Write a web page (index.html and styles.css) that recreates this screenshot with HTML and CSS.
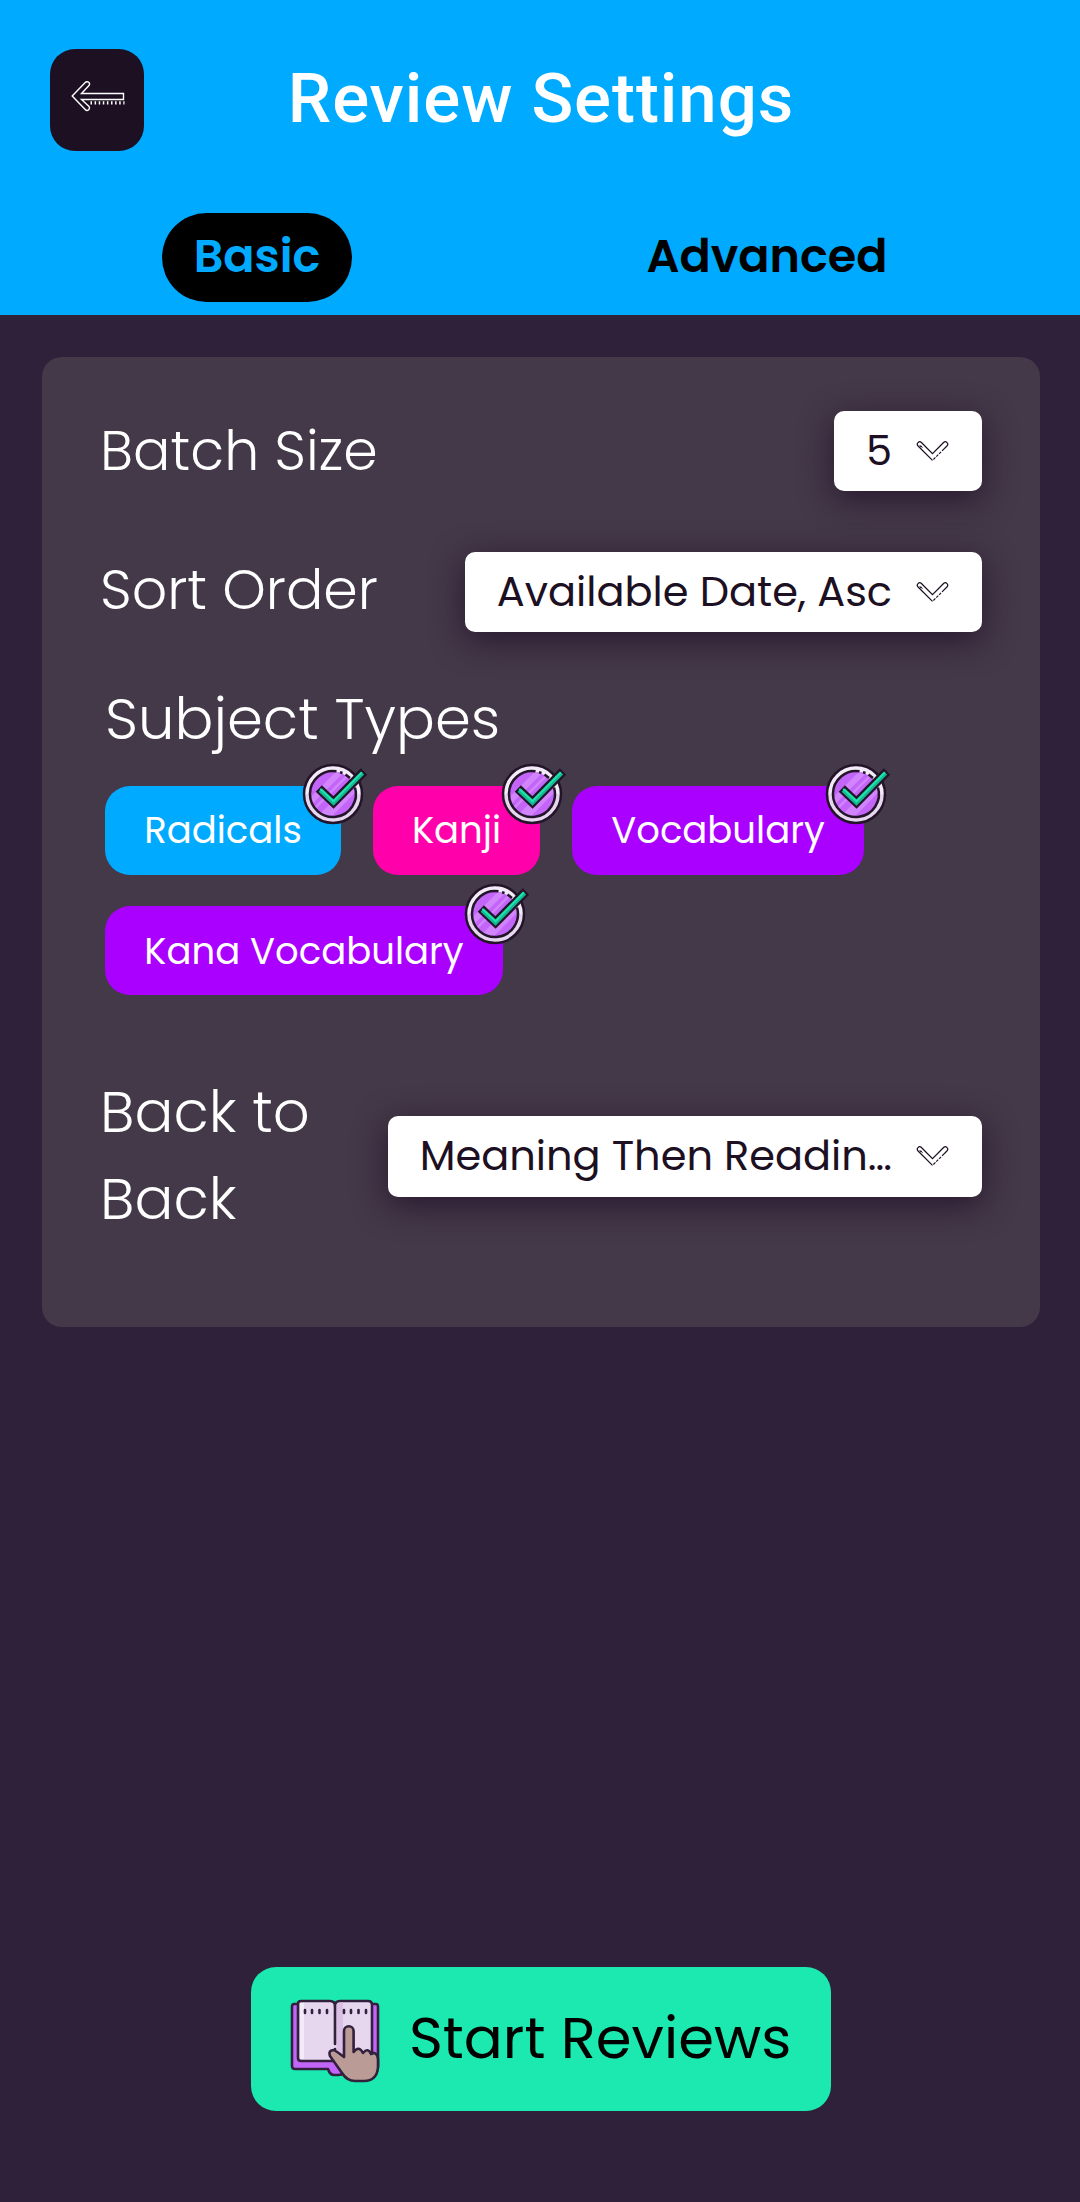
FILE: index.html
```html
<!DOCTYPE html>
<html lang="en">
<head>
<meta charset="utf-8">
<title>Review Settings</title>
<link rel="stylesheet" href="styles.css">
</head>
<body>
<svg class="defs" aria-hidden="true">
  <defs>
    <clipPath id="disc"><circle cx="31" cy="31" r="22.5"/></clipPath>
    <linearGradient id="rim" x1="0" y1="0" x2="0" y2="1">
      <stop offset=".5" stop-color="#f4ebf8"/><stop offset=".5" stop-color="#e6d6ee"/>
    </linearGradient>
  </defs>
  <symbol id="check" viewBox="0 0 66 62">
    <circle cx="31" cy="31" r="29" fill="url(#rim)" stroke="#231429" stroke-width="2.5"/>
    <circle cx="31" cy="31" r="22.5" fill="#c465fa"/>
    <g clip-path="url(#disc)" stroke="#d184fb">
      <path d="M2 45 42 5" stroke-width="6"/>
      <path d="M6 52 54 4" stroke-width="2.5"/>
      <path d="M16 60 62 14" stroke-width="10"/>
    </g>
    <path d="M34.500 8.300A23 23 0 1 0 53 24.500" fill="none" stroke="#231429" stroke-width="2.500"/>
    <path d="M38 9.200 40.500 10M43.500 11.500 48 15" fill="none" stroke="#231429" stroke-width="2.500"/>
    <path d="M16.800 25.500 31.500 39.500 62 8.500" fill="none" stroke="#231429" stroke-width="9"/>
    <path d="M18.200 27 31.500 39.500 60.500 10" fill="none" stroke="#14b892" stroke-width="4.600"/>
    <path d="M18.200 25.800 31.500 38.200 60 9.400" fill="none" stroke="#1ee6ad" stroke-width="1.800"/>
  </symbol>
  <symbol id="chevron" viewBox="0 0 34 22">
    <path d="M17 20.300 1.900 5.200A2.500 2.500 0 0 1 5.400 1.600L17 13.200 28.600 1.600A2.500 2.500 0 0 1 32.100 5.200L27 10.300" fill="none" stroke="#1c1022" stroke-width="1.300"/>
    <path d="M26 11.300 17 20.300" fill="none" stroke="#1c1022" stroke-width="1.200" stroke-dasharray="3 1.200"/>
    <path d="M4.500 4.500 6.500 7M3.500 4.800 5 6.500" stroke="#1c1022" stroke-width="1"/>
  </symbol>
</svg>

<header class="header">
  <div class="title-bar">
    <button class="back" aria-label="Back">
      <svg viewBox="0 0 54 32" width="54" height="32" fill="none" stroke="#fff" stroke-width="1.400">
        <path d="M1.200 16 14.200 2.500A2.300 2.300 0 0 1 17.800 5.800L10.500 13.500H52.500V19.500H10.500L17.800 26.200A2.300 2.300 0 0 1 14.200 29.500Z"/>
        <path d="M19.500 22.800H53.500" stroke-width="3.200" stroke-dasharray="1.500 2.600"/>
      </svg>
    </button>
    <h1 class="title">Review Settings</h1>
  </div>
  <nav class="tabs">
    <div class="tab-cell"><a class="tab tab-active">Basic</a></div>
    <div class="tab-cell"><a class="tab">Advanced</a></div>
  </nav>
</header>

<main class="main">
  <section class="panel">
    <div class="row">
      <span class="label">Batch Size</span>
      <div class="select"><span class="value">5</span><svg class="chevron"><use href="#chevron"/></svg></div>
    </div>
    <div class="row row-sort">
      <span class="label">Sort Order</span>
      <div class="select"><span class="value">Available Date, Asc</span><svg class="chevron"><use href="#chevron"/></svg></div>
    </div>
    <div class="subjects">
      <h2 class="label heading">Subject Types</h2>
      <div class="chips">
        <div class="chip radicals">Radicals<svg class="check"><use href="#check"/></svg></div>
        <div class="chip kanji">Kanji<svg class="check"><use href="#check"/></svg></div>
        <div class="chip vocabulary">Vocabulary<svg class="check"><use href="#check"/></svg></div>
        <div class="chip kana">Kana Vocabulary<svg class="check"><use href="#check"/></svg></div>
      </div>
    </div>
    <div class="row row-back">
      <span class="label label-back">Back to<br>Back</span>
      <div class="select select-back"><span class="value">Meaning Then Readin…</span><svg class="chevron"><use href="#chevron"/></svg></div>
    </div>
  </section>
</main>

<footer class="footer">
  <button class="start">
    <svg class="book" viewBox="0 0 90 84" stroke="#33203d" stroke-width="2.600" stroke-linejoin="round" stroke-linecap="round">
      <path d="M4 5H86Q88 5 88 8V68H58Q56 76 48 76H44Q40 76 38 70H5Q2 70 2 67V8Q2 5 4 5Z" fill="#c465fa"/>
      <path d="M11 2H40Q45 2 45 7Q45 2 50 2H78Q82 2 82 6V62H11Q8 62 8 59V5Q8 2 11 2Z" fill="#e6d6ee"/>
      <path d="M10 4H14V60H10Z" fill="#f4ebf8" stroke="none"/>
      <path d="M46.500 6Q48 3.500 53 3.500V60H46.500Z" fill="#dbc0e5" stroke="none"/>
      <path d="M45 7V45M45 50V51"/>
      <path d="M15 11V14M22 11V14M29.500 11V14M37 11V14M54 11V14M61 11V14M68.500 11V14M76 11V14"/>
      <path d="M54 58V32A4.800 4.800 0 0 1 63.600 32V53Q69 46 73 54Q78 48 81 55Q87 52 88 60V68Q87 82 74 82H65Q57 82 52 74L40 57Q38 51 44 51Q49 54 54 58Z" fill="#ba9b95"/>
    </svg>
    <span class="start-text">Start Reviews</span>
  </button>
</footer>
</body>
</html>
```
FILE: styles.css
```css
* { box-sizing: border-box; }

body {
  margin: 0;
  min-height: 2202px;
  display: flex;
  flex-direction: column;
  background: #30213a;
  color: #fff;
  font-family: Poppins, Inter, "Open Sans", sans-serif;
}

button { border: 0; padding: 0; font: inherit; }
.defs { position: absolute; width: 0; height: 0; }

.header {
  height: 315px;
  flex: none;
  background: #00aaff;
}
.title-bar {
  display: grid;
  grid-template-columns: 94px 1fr 94px;
  align-items: center;
  padding: 49px 48px 0 50px;
}
.back {
  display: flex;
  align-items: center;
  justify-content: center;
  height: 102px;
  padding: 0 0 8px 1px;
  border-radius: 25px;
  background: #1c1022;
}
.title {
  margin: 0;
  padding-bottom: 2px;
  text-align: center;
  font: 500 69px/80px Roboto, sans-serif;
  letter-spacing: .93px;
}
.tabs {
  display: grid;
  grid-template-columns: 1fr 1fr;
  margin-top: 62px;
  padding: 0 58px 0 2px;
  font-weight: 600;
  font-size: 46.100px;
}
.tab-cell { display: flex; justify-content: center; }
.tab {
  height: 89px;
  padding-bottom: 3px;
  display: flex;
  align-items: center;
  justify-content: center;
  color: #000;
}
.tab-active {
  width: 190px;
  border-radius: 45px;
  background: #000;
  color: #00aaff;
}

.main { padding: 42px 40px 0 42px; flex: none; }
.panel {
  height: 970px;
  padding: 54px 58px 0;
  border-radius: 20px;
  background: #433948;
}
.row {
  display: flex;
  align-items: center;
  justify-content: space-between;
}
.row-sort { margin-top: 61px; }
.row-sort .label { padding-bottom: 2px; margin-top: -2px; }
.row-back { margin-top: 73px; }
.label {
  font-weight: 300;
  font-size: 55.400px;
  line-height: 80px;
}
.heading, .label-back { font-size: 57.700px; }
.label-back { line-height: 87px; padding-bottom: 2px; }
.heading { margin: 0; }
.select {
  height: 80px;
  padding: 0 33px 0 32px;
  display: flex;
  align-items: center;
  gap: 24px;
  border-radius: 10px;
  background: #fff;
  color: #1c1022;
  font-size: 41.500px;
  box-shadow: 0 8px 32px rgba(36, 18, 42, .85);
}
.select-back { height: 81px; }
.value { padding-bottom: 2px; }
.chevron { width: 33px; height: 21px; flex: none; }
.subjects { margin-top: 47px; padding-left: 5px; }
.chips {
  display: flex;
  flex-wrap: wrap;
  gap: 31px 32px;
  margin-top: 27px;
}
.chip {
  position: relative;
  display: flex;
  align-items: center;
  justify-content: center;
  height: 89px;
  padding-bottom: 1px;
  border-radius: 25px;
  font-size: 37px;
}
.radicals { width: 236px; background: #00aaff; }
.kanji { width: 167px; background: #ff00aa; }
.vocabulary { width: 292px; background: #aa00ff; }
.kana { width: 398px; padding-bottom: 0; background: #aa00ff; }
.check {
  position: absolute;
  top: -23px;
  right: -26.500px;
  width: 66px;
  height: 62px;
}

.footer {
  margin-top: auto;
  padding: 0 0 91px 2px;
  display: flex;
  justify-content: center;
}
.start {
  display: flex;
  align-items: center;
  gap: 29px;
  width: 580px;
  height: 144px;
  padding-left: 39px;
  border-radius: 25px;
  background: #1be9b0;
  color: #000;
  font-size: 57.700px;
}
.start-text { padding-bottom: 3px; }
.book { width: 90px; height: 84px; margin-top: 4px; flex: none; }
```
